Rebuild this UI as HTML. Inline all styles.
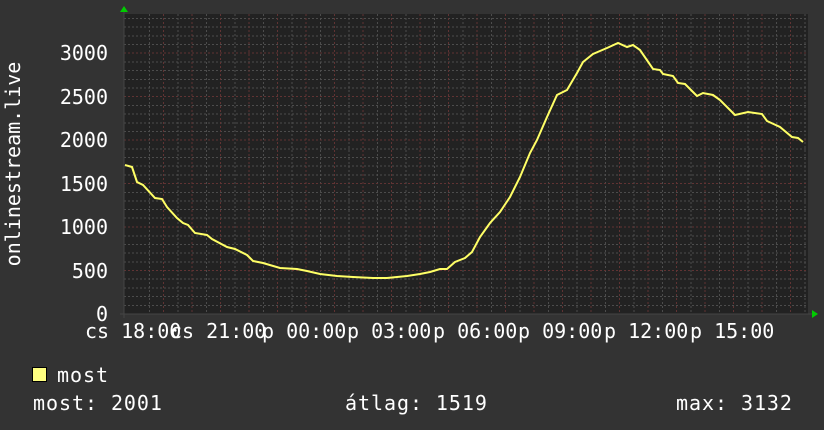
<!DOCTYPE html>
<html><head><meta charset="utf-8"><style>
html,body{margin:0;padding:0;background:#333;}
svg{display:block}
text{font-family:"DejaVu Sans Mono","Liberation Mono",monospace;font-size:20px;fill:#fff}
.lg{letter-spacing:0.95px}
</style></head><body>
<svg width="824" height="430" xmlns="http://www.w3.org/2000/svg">
<rect width="824" height="430" fill="#333"/>
<rect x="124" y="14" width="684" height="300" fill="#222"/>
<g stroke-width="1" stroke-dasharray="2,2">
<g stroke="#4c4c4c">
<path d="M149.5 14V314M178 14V314M206.5 14V314M235 14V314M263.5 14V314M292 14V314M320.5 14V314M349 14V314M377.5 14V314M406 14V314M434.5 14V314M463 14V314M491.5 14V314M520 14V314M548.5 14V314M577 14V314M605.5 14V314M634 14V314M662.5 14V314M691 14V314M719.5 14V314M748 14V314M776.5 14V314M805 14V314"/>
<path d="M124 305.5H808M124 296.5H808M124 288H808M124 279H808M124 262H808M124 253H808M124 244.5H808M124 236H808M124 218H808M124 209.5H808M124 201H808M124 192.5H808M124 175H808M124 166H808M124 157.5H808M124 149H808M124 131.5H808M124 123H808M124 114H808M124 105.5H808M124 88H808M124 79.5H808M124 70.5H808M124 62H808M124 44.5H808M124 36H808M124 27H808M124 18.5H808"/>
</g>
<g stroke="#603333">
<path d="M163.5 14V314M192 14V314M220.5 14V314M249 14V314M277.5 14V314M306 14V314M334.5 14V314M363 14V314M391.5 14V314M420 14V314M448.5 14V314M477 14V314M505.5 14V314M534 14V314M562.5 14V314M591 14V314M619.5 14V314M648 14V314M676.5 14V314M705 14V314M733.5 14V314M762 14V314M790.5 14V314"/>
<path d="M124 270.5H808M124 227H808M124 183.5H808M124 140H808M124 96.5H808M124 53H808"/>
</g>
</g>
<path d="M124 9V318M120 314H812" stroke="#444" stroke-width="1"/>
<path d="M120 12L124 6L128 12Z M812 310L818 314L812 318Z" fill="#0c0"/>
<polyline fill="none" stroke="#ffff66" stroke-width="2" stroke-linejoin="miter" points="125,165 132,167 137,182 143,185 155,198 162,199 167,207 177,218 183,223 188,225 195,233 207,235 212,239 227,247 235,249 247,255 253,261 263,263 280,268 297,269 307,271 320,274 337,276 353,277 373,278 387,278 407,276 420,274 430,272 440,269 447,269 455,262 465,258 472,252 480,237 490,223 500,212 510,197 520,177 530,153 537,140 547,117 557,95 567,90 577,73 583,62 593,54 607,48 618,43 627,47 633,45 640,50 653,69 660,70 663,74 673,76 678,83 685,84 697,96 703,93 713,95 720,100 735,115 748,112 762,114 767,121 780,127 792,137 798,138 803,142"/>
<g text-anchor="end">
<text x="108" y="60">3000</text><text x="108" y="104">2500</text><text x="108" y="147">2000</text>
<text x="108" y="191">1500</text><text x="108" y="234">1000</text><text x="108" y="278">500</text><text x="108" y="321">0</text>
</g>
<text transform="translate(20,164) rotate(-90)" text-anchor="middle">onlinestream.live</text>
<text x="85" y="338">cs 18:00</text>
<text x="170" y="338">cs 21:00</text>
<text x="262" y="338">p 00:00</text>
<text x="347" y="338">p 03:00</text>
<text x="433" y="338">p 06:00</text>
<text x="518" y="338">p 09:00</text>
<text x="604" y="338">p 12:00</text>
<text x="690" y="338">p 15:00</text>
<rect x="32.5" y="367.5" width="14" height="14" fill="#ffff80" stroke="#000"/>
<text class="lg" x="57" y="382">most</text>
<text class="lg" x="33" y="410">most: 2001</text>
<text class="lg" x="345" y="410">átlag: 1519</text>
<text class="lg" x="676" y="410">max: 3132</text>
</svg>
</body></html>
